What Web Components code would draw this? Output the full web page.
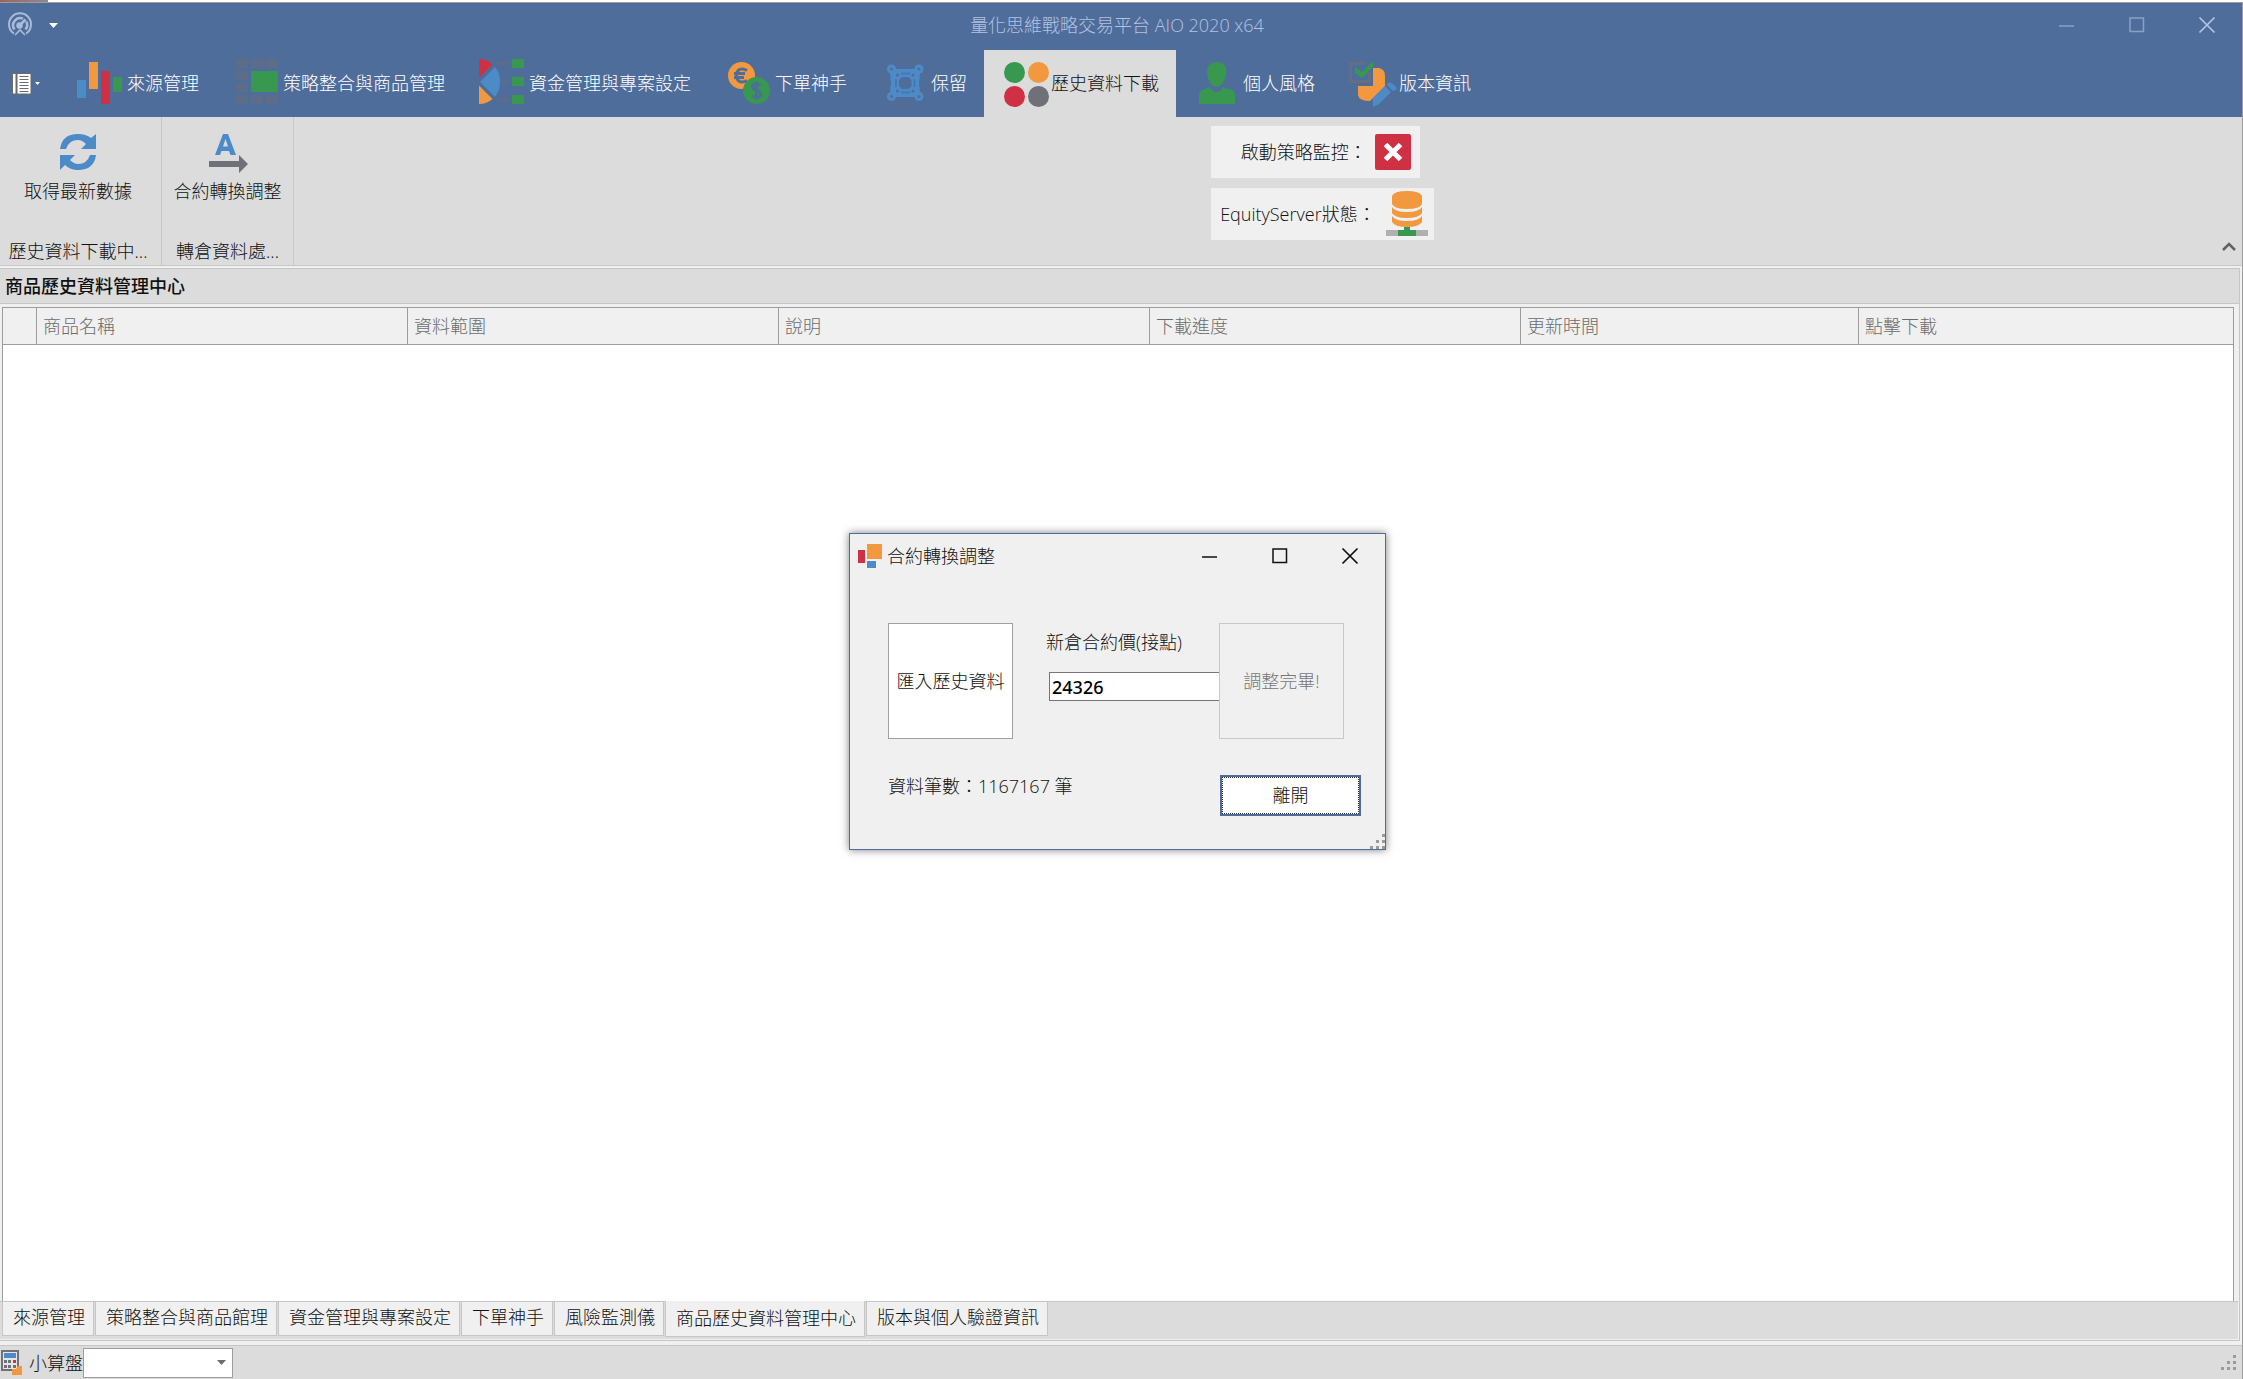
<!DOCTYPE html>
<html lang="zh-Hant">
<head>
<meta charset="utf-8">
<title>量化思維戰略交易平台 AIO 2020 x64</title>
<style>
  html, body { margin: 0; height: 100%; background: #fff; overflow: hidden; }
  body {
    --blue: #4f6d9b; --bar: #dcdcdc; --panel: #f0f0f0; --line: #c6c6c6; --edge: #9d9d9d;
    font: 300 18px/24px "Open Sans", "Noto Sans CJK TC", sans-serif; color: #111;
  }
</style>
</head>
<body>
<trading-app></trading-app>

<script>
const define = (name, html, setup) => {
  const template = document.createElement('template');
  template.innerHTML = '<style>*{box-sizing:border-box}:host{box-sizing:border-box}button{font:inherit;color:inherit;margin:0;padding:0;border:0;background:none}svg{display:block}</style>' + html;
  customElements.define(name, class extends HTMLElement {
    connectedCallback() {
      if (this.shadowRoot) return;
      this.attachShadow({ mode: 'open' }).append(template.content.cloneNode(true));
      if (setup) setup(this, this.shadowRoot);
    }
  });
};

const R = '#d03044', O = '#f2983e', G = '#39984f', B = '#4d8ac8', K = '#6f7078';
const icons = {
  gauge: [24, 24, `<g fill="none" stroke="#a9bbdb"><path stroke-width="2" d="M6 20.5A11 11 0 1 1 18 20.5"/><path stroke-width="2.5" d="M6.5 16.5A7.2 7.2 0 0 1 15 5.6M18.3 8.5A7.2 7.2 0 0 1 17.5 16.5"/><path stroke-width="2.5" d="M11 13L17.5 6.5"/><path stroke-width="1.6" d="M7 22L12 17L17 22"/></g><circle cx="11.5" cy="12.5" r="3.2" fill="#a9bbdb"/>`],
  menu: [20, 22, `<path fill="#fff" stroke="#6b6b6b" d="M.5 .5h18.5v20.5H.5z"/><path stroke="#6b6b6b" stroke-width="2" d="M4.5 1v20"/><path stroke="#6b6b6b" d="M7.5 3.5h9M7.5 6.5h9M7.5 9.5h9M7.5 12.5h9M7.5 15.5h9M7.5 18.5h9"/>`],
  bars: [48, 48, `<path fill="${B}" d="M1 21h9v18H1z"/><path fill="${O}" d="M13 3h9v27h-9z"/><path fill="${R}" d="M25 12h9v33h-9z"/><path fill="${G}" d="M37 18h9v15h-9z"/>`],
  grid: [48, 48, `<path fill="#5d6c87" d="M4 0h12v9H4zM19 0h12v9H19zM34 0h12v9H34zM4 12h12v9H4zM4 24h12v9H4zM4 36h12v9H4zM19 36h12v9H19zM34 36h12v9H34z"/><path fill="${G}" d="M19 12h27v21H19z"/>`],
  pie: [48, 48, `<path fill="${R}" d="M1 0Q9 0 14.500 5.500L1 19z"/><path fill="${O}" d="M1 26.500L14.500 40Q9 45 1 45z"/><path fill="${B}" d="M2 23L17 8Q22 14 22 22.500T17 38z"/><path fill="${G}" d="M34 0h12v9H34zM34 18h12v9H34zM34 36h12v9H34z"/><path stroke="#5d6c87" stroke-width="3" d="M19 4.500h12M25 22.500h6M19 40.500h12"/>`],
  coins: [48, 48, `<circle cx="17.500" cy="16.500" r="13.500" fill="${O}"/><path fill="none" stroke="#4f6d9b" stroke-width="3" d="M23 11.500C18 8.500 12.500 10 12.500 16.500S18 24.500 23 21.500M10 14.500h11M10 18.500h10"/><circle cx="32.500" cy="31.500" r="13.500" fill="${G}"/><path fill="none" stroke="#4f6d9b" stroke-width="3" d="M37 26.500C32 24 28 25 28.500 28C29 32 37 31 37 35.500C36.500 39 32 39 28 37M32.500 22.500v18"/>`],
  frame: [48, 48, `<circle cx="25.500" cy="24" r="22.500" fill="none" stroke="#596b8d" stroke-width="2"/><g fill="${B}"><circle cx="11.500" cy="10" r="4.500"/><circle cx="39" cy="10" r="4.500"/><circle cx="11.500" cy="37.500" r="4.500"/><circle cx="39" cy="37.500" r="4.500"/><path fill-rule="evenodd" d="M13 10H37.500Q38 13 40 14L39 24L40 34Q38 35 37.500 38H13Q13 35 10 34L11 24L10 14Q13 13 13 10zM22 18L19 21V27L22 30H28.500L31.500 27V21L28.500 18z"/></g><g fill="#4f6d9b"><circle cx="11.500" cy="10" r="1.500"/><circle cx="39" cy="10" r="1.500"/><circle cx="11.500" cy="37.500" r="1.500"/><circle cx="39" cy="37.500" r="1.500"/><circle cx="17.500" cy="16" r="1.500"/><circle cx="33" cy="16" r="1.500"/><circle cx="17.500" cy="32" r="1.500"/><circle cx="33" cy="32" r="1.500"/></g><path fill="none" stroke="#4779b0" stroke-width="2" d="M21 14.500h9M21 33.500h9M16 20v8M34.500 20v8"/>`],
  dots: [48, 48, `<circle cx="14.500" cy="13.500" r="10.500" fill="${G}"/><circle cx="38.500" cy="13.500" r="10.500" fill="${O}"/><circle cx="14.500" cy="37.500" r="10.500" fill="${R}"/><circle cx="38.500" cy="37.500" r="10.500" fill="${K}"/>`],
  person: [48, 48, `<path fill="${G}" d="M24 3Q34 3 34.500 12Q34 19 30 25Q27 28 24.500 28Q22 28 19 25Q15 19 15 12Q16 4 24 3z"/><path fill="${G}" d="M7 45V36Q8 31 12 30.500L18 28Q20 33 24.500 33T31 28L38 30.500Q43 31 43 36V45z"/>`],
  edit: [48, 48, `<path fill="${O}" d="M25 9H31Q37 10 37 17V27L22 42Q11 42 10 36V27H25z"/><path fill="none" stroke="#656e80" stroke-width="3" d="M18 4.500H2.500V22.500H21.500V14"/><path fill="${G}" d="M7 8L14 13L25 2V8L14 19L7 14z"/><path fill="${B}" d="M25 39L37 27L43 33L31 45L25 48zM38.500 25.500L41 23.500Q43 23 45 25L49 29Q49 31 45 32z"/>`],
  refresh: [36, 36, `<path fill="${B}" d="M0 15Q2 0 18 0Q26 0 31 4L36 0V15H21L26 10Q22 6 18 6Q9 6 6 15z"/><path fill="${B}" d="M36 21Q34 36 18 36Q10 36 5 31L0 36V21H15L10 26Q14 30 18 30Q27 30 30 21z"/>`],
  convert: [40, 40, `<path fill="${B}" fill-rule="evenodd" d="M7 21L15 0H20L28 21H22.500L21 17H13.500L12 21zM15 12.500H20L17.500 5z"/><path fill="${K}" d="M1 27H31V21L40 30L31 39V33H1z"/>`],
  cross: [36, 36, `<rect width="36" height="36" rx="2" fill="${R}"/><path stroke="#fff" stroke-width="5" d="M10.500 10.500L25.500 25.500M25.500 10.500L10.500 25.500"/>`],
  db: [42, 45, `<g fill="${O}"><path d="M6 5Q8 0 21 0T36 5V13Q34 18 21 18T6 13z"/><path d="M6 16Q9 21 21 21T36 16V22Q33 27 21 27T6 22z"/><path d="M6 25Q9 30 21 30T36 25V31Q33 36 21 36T6 31z"/></g><path fill="#b0b0b2" d="M0 39h42v6H0z"/><path fill="${G}" d="M18 36h6v3h6v6H12v-6h6z"/>`],
  calc: [22, 25, `<path fill="#e6e6e6" stroke="#6f7078" stroke-width="2" d="M1 1h16v19H1z"/><path fill="${B}" d="M3 3h12v5H3z"/><path fill="#6f7078" d="M3 10h3v3H3zM7 10h3v3H7zM3 15h3v3H3zM7 15h3v3H7zM12 15h3v3h-3z"/><path fill="${R}" d="M12 10h3v3h-3z"/><path fill="${O}" d="M11 19h4l2-3h4v9H11z"/>`],
  form: [24, 24, `<path fill="${O}" d="M9 0h15v15H9z"/><path fill="${R}" d="M0 6h7v13H0z"/><path fill="${B}" d="M9 17h9v7H9z"/>`],
  min: [16, 16, `<path stroke="currentColor" stroke-width="1.5" d="M0 9h15"/>`],
  max: [16, 16, `<path fill="none" stroke="currentColor" stroke-width="1.5" d="M1 1h13.500v13.500H1z"/>`],
  close: [16, 16, `<path stroke="currentColor" stroke-width="1.7" d="M.5 .5l15 15M15.500 .5l-15 15"/>`],
  caret: [9, 5, `<path fill="currentColor" d="M0 0h9L4.500 5z"/>`],
  smallcaret: [5, 3, `<path fill="currentColor" d="M0 0h5L2.500 3z"/>`],
  up: [14, 9, `<path fill="none" stroke="#616161" stroke-width="2.500" d="M1 8L7 2L13 8"/>`],
  grip: [15, 15, `<path fill="#9b9b9b" d="M12 0h3v3h-3zM6 6h3v3H6zM12 6h3v3h-3zM0 12h3v3H0zM6 12h3v3H6zM12 12h3v3h-3z"/>`]
};

define('app-icon', '<style>:host{display:block;flex:none}</style>', (el, root) => {
  const [w, h, art] = icons[el.getAttribute('name')];
  root.innerHTML += `<svg width="${w}" height="${h}" viewBox="0 0 ${w} ${h}" overflow="visible" aria-hidden="true">${art}</svg>`;
});

define('window-buttons', `
<style>
  :host { display: flex; flex: none; align-self: stretch; }
  button { width: 70px; display: flex; align-items: center; justify-content: center; }
  .soft { opacity: var(--soft, 1); }
</style>
<button class="soft" aria-label="最小化"><app-icon name="min"></app-icon></button>
<button class="soft" aria-label="最大化"><app-icon name="max"></app-icon></button>
<button aria-label="關閉"><app-icon name="close"></app-icon></button>`);

define('title-bar', `
<style>
  :host { display: grid; grid-template-columns: 1fr auto 1fr; align-items: center; height: 44px; flex: none; background: var(--blue); color: #b3c3e0; }
  .quick { display: flex; align-items: center; gap: 17px; padding-left: 8px; }
  .quick button { color: #fff; }
  .title { padding-right: 8px; }
  window-buttons { justify-self: end; --soft: .6; }
</style>
<div class="quick"><app-icon name="gauge"></app-icon><button aria-label="自訂快速存取工具列"><app-icon name="caret"></app-icon></button></div>
<div class="title"><slot></slot></div>
<window-buttons></window-buttons>`);

define('ribbon-tab', `
<style>
  :host { display: block; flex: none; color: #fff; }
  :host([active]) { background: var(--bar); color: #111; }
  button { display: flex; align-items: center; gap: 3px; padding: 9px 17px 0 16px; white-space: nowrap; }
</style>
<button role="tab"><slot name="icon"></slot><slot></slot></button>`);

define('ribbon-tabs', `
<style>
  :host { display: flex; height: 70px; padding-top: 3px; flex: none; background: var(--blue); }
  .file { display: flex; align-items: center; gap: 3px; width: 60px; padding-left: 12px; color: #fff; }
</style>
<button class="file" aria-label="檔案"><app-icon name="menu"></app-icon><app-icon name="smallcaret"></app-icon></button>
<slot></slot>`);

define('ribbon-group', `
<style>
  :host { display: flex; flex-direction: column; align-items: center; justify-content: space-between; flex: none; width: 132px; padding: 17px 12px 2px 12px; border-right: 1px solid var(--line); }
  :host([wide]) { width: 162px; padding-left: 7px; }
  button { display: flex; flex-direction: column; align-items: center; gap: 5px; white-space: nowrap; }
  .art { height: 40px; }
</style>
<button><span class="art"><slot name="icon"></slot></span><slot></slot></button>
<div><slot name="caption"></slot></div>`);

define('status-chip', `
<style>
  :host { display: flex; align-items: center; justify-content: flex-end; gap: 8px; height: 52px; padding-bottom: 1px; background: var(--panel); white-space: nowrap; }
</style>
<slot></slot>`);

define('ribbon-panel', `
<style>
  :host { display: grid; grid-template-columns: 54% auto 1fr; height: 149px; flex: none; background: var(--bar); border-bottom: 1px solid var(--line); }
  .groups { display: flex; }
  .chips { display: flex; flex-direction: column; gap: 10px; align-items: flex-start; padding-top: 9px; }
  .end { display: flex; justify-content: flex-end; align-items: flex-end; padding: 0 6px 14px 0; }
  .monitor { width: 209px; padding-right: 9px; }
  .server { width: 223px; padding-right: 6px; gap: 10px; }
</style>
<div class="groups">
  <ribbon-group wide><app-icon slot="icon" name="refresh"></app-icon>取得最新數據<span slot="caption">歷史資料下載中...</span></ribbon-group>
  <ribbon-group><app-icon slot="icon" name="convert"></app-icon>合約轉換調整<span slot="caption">轉倉資料處...</span></ribbon-group>
</div>
<div class="chips">
  <status-chip class="monitor">啟動策略監控：<app-icon name="cross"></app-icon></status-chip>
  <status-chip class="server">EquityServer狀態：<app-icon name="db"></app-icon></status-chip>
</div>
<div class="end"><button aria-label="摺疊功能區"><app-icon name="up"></app-icon></button></div>`);

define('history-grid', `
<style>
  :host { display: flex; flex-direction: column; flex: 1; min-height: 0; margin: 3px 5px 0 2px; background: #fff; border: 1px solid var(--edge); border-bottom: 0; }
  table { width: 100%; border-collapse: separate; border-spacing: 0; table-layout: fixed; }
  th { height: 37px; padding: 0 0 0 6px; text-align: left; font-weight: inherit; color: #6c6c6c; background: var(--panel); border-right: 1px solid var(--edge); border-bottom: 1px solid var(--edge); }
  th:last-child { border-right: 0; }
  .mark { width: 34px; } .wide { width: 371px; } .time { width: 338px; }
</style>
<table>
  <colgroup><col class="mark"><col class="wide"><col class="wide"><col class="wide"><col class="wide"><col class="time"><col></colgroup>
  <thead><tr><th></th><th>商品名稱</th><th>資料範圍</th><th>說明</th><th>下載進度</th><th>更新時間</th><th>點擊下載</th></tr></thead>
</table>`);

define('dock-tab', `
<style>
  :host { display: block; flex: none; height: 35px; background: var(--panel); border: 1px solid var(--line); }
  :host([active]) { height: 36px; border-top-color: var(--panel); }
  button { padding: 3px 8px 0 10px; display: block; white-space: nowrap; }
  :host([active]) button { padding-top: 4px; }
</style>
<button role="tab"><slot></slot></button>`);

define('dock-tabs', `
<style>
  :host { display: flex; align-items: flex-start; gap: 1px; height: 38px; flex: none; margin-right: 1px; padding-left: 2px; background: linear-gradient(var(--line) 1px, var(--bar) 1px); }
</style>
<slot></slot>`);

define('dock-panel', `
<style>
  :host { display: flex; flex-direction: column; flex: 1; min-height: 0; margin: 2px 2px 4px 0; border: 1px solid var(--line); border-left: 0; background: var(--panel); padding-bottom: 1px; }
  h1 { margin: 0; height: 35px; padding: 5px; font-size: 18px; line-height: 24px; font-weight: 500; background: var(--bar); border-bottom: 1px solid var(--line); }
</style>
<h1>商品歷史資料管理中心</h1>
<history-grid></history-grid>
<dock-tabs>
  <dock-tab>來源管理</dock-tab><dock-tab>策略整合與商品館理</dock-tab><dock-tab>資金管理與專案設定</dock-tab><dock-tab>下單神手</dock-tab><dock-tab>風險監測儀</dock-tab><dock-tab active>商品歷史資料管理中心</dock-tab><dock-tab>版本與個人驗證資訊</dock-tab>
</dock-tabs>`);

define('status-bar', `
<style>
  :host { display: flex; align-items: center; height: 34px; flex: none; padding: 0 6px 0 1px; background: var(--bar); border-top: 1px solid var(--line); }
  label { padding-left: 6px; }
  .combo { display: grid; align-items: center; width: 150px; }
  .combo > * { grid-area: 1 / 1; }
  select { appearance: none; width: 100%; height: 30px; border: 1px solid var(--edge); border-radius: 0; background: #fff; font: inherit; }
  .combo app-icon { justify-self: end; margin-right: 7px; color: #6d6d6d; pointer-events: none; }
  .grip { margin-left: auto; }
</style>
<app-icon name="calc"></app-icon><label for="calc">小算盤</label>
<div class="combo"><select id="calc"><option></option></select><app-icon name="caret"></app-icon></div>
<app-icon class="grip" name="grip"></app-icon>`);

define('price-field', `
<style>
  :host { display: flex; flex-direction: column; gap: 18px; padding-top: 7px; }
  .box { display: flex; padding-left: 3px; }
  input { flex: 1; width: 0; height: 29px; margin: 0; padding: 0 2px; border: 1px solid #767676; border-right: 0; border-radius: 0; background: #fff; color: #000; font: 500 18px/24px "Noto Sans", sans-serif; }
</style>
<label for="price">新倉合約價(接點)</label>
<div class="box"><input id="price" value="24326"></div>`);

define('contract-dialog', `
<style>
  :host { position: absolute; left: 849px; top: 533px; width: 537px; height: 317px; display: flex; flex-direction: column; background: var(--panel); border: 1px solid var(--blue); box-shadow: 0 0 8px rgba(0,0,0,.5); }
  header { display: flex; align-items: center; gap: 5px; height: 44px; flex: none; padding-left: 8px; }
  window-buttons { margin-left: auto; }
  .row { display: flex; padding: 45px 41px 0 38px; }
  .big { flex: none; width: 125px; height: 116px; background: #fff; border: 1px solid #a0a0a0; }
  .big:disabled { background: var(--panel); border-color: #c8c8c8; color: #777; }
  price-field { flex: 1; min-width: 0; padding-left: 33px; }
  .foot { display: flex; justify-content: space-between; padding: 36px 24px 0 38px; line-height: 22px; }
  .leave { width: 141px; height: 41px; padding-bottom: 2px; background: #fff; border: 2px solid var(--blue); outline: 1px dotted #333; outline-offset: -3px; }
  .grip { margin: auto 0 0 auto; }
</style>
<header><app-icon name="form"></app-icon><span>合約轉換調整</span><window-buttons></window-buttons></header>
<div class="row"><button class="big">匯入歷史資料</button><price-field></price-field><button class="big" disabled>調整完畢!</button></div>
<div class="foot"><span>資料筆數：1167167 筆</span><button class="leave">離開</button></div>
<app-icon class="grip" name="grip"></app-icon>`);

define('trading-app', `
<style>
  :host { display: flex; flex-direction: column; height: 100vh; }
  .behind { height: 2px; flex: none; background: linear-gradient(90deg, #a0625c, #8b8a93 48px, #fff 48px); }
  main { display: flex; flex-direction: column; flex: 1; min-height: 0; border: 1px solid var(--edge); border-left: 0; border-bottom: 0; background: var(--panel); }
</style>
<div class="behind"></div>
<main>
  <title-bar>量化思維戰略交易平台 AIO 2020 x64</title-bar>
  <ribbon-tabs>
    <ribbon-tab><app-icon slot="icon" name="bars"></app-icon>來源管理</ribbon-tab><ribbon-tab><app-icon slot="icon" name="grid"></app-icon>策略整合與商品管理</ribbon-tab><ribbon-tab><app-icon slot="icon" name="pie"></app-icon>資金管理與專案設定</ribbon-tab><ribbon-tab><app-icon slot="icon" name="coins"></app-icon>下單神手</ribbon-tab><ribbon-tab><app-icon slot="icon" name="frame"></app-icon>保留</ribbon-tab><ribbon-tab active><app-icon slot="icon" name="dots"></app-icon>歷史資料下載</ribbon-tab><ribbon-tab><app-icon slot="icon" name="person"></app-icon>個人風格</ribbon-tab><ribbon-tab><app-icon slot="icon" name="edit"></app-icon>版本資訊</ribbon-tab>
  </ribbon-tabs>
  <ribbon-panel></ribbon-panel>
  <dock-panel></dock-panel>
  <status-bar></status-bar>
</main>
<contract-dialog></contract-dialog>`);
</script>
</body>
</html>
